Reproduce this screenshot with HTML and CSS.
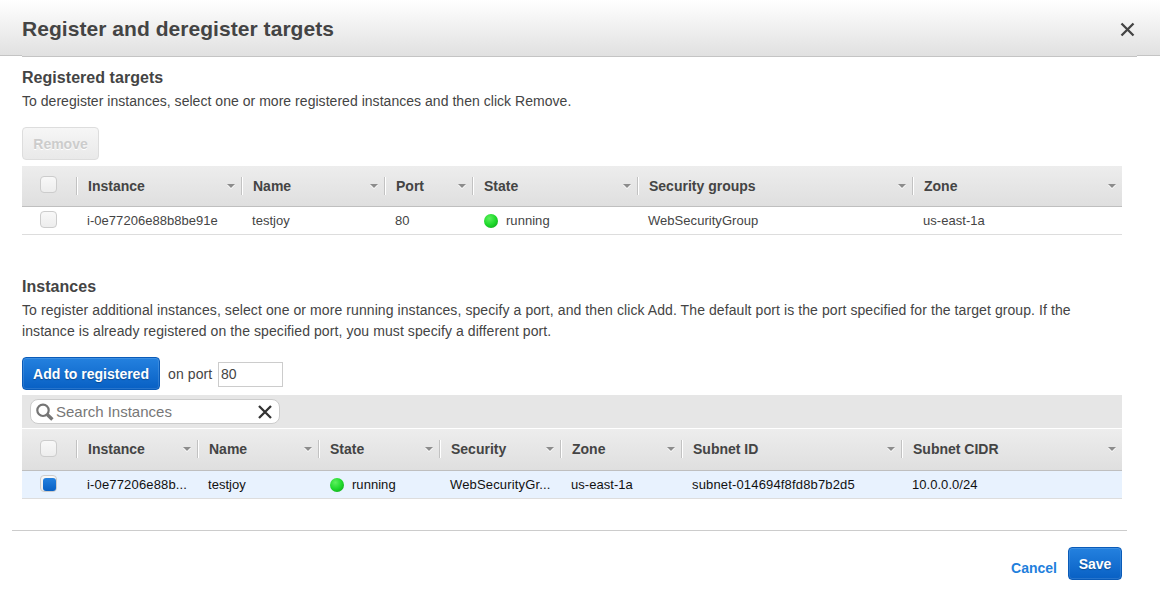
FILE: index.html
```html
<!DOCTYPE html>
<html lang="en">
<head>
<meta charset="utf-8">
<title>Register and deregister targets</title>
<link rel="stylesheet" href="styles.css">
</head>
<body>
<header class="titlebar">
  <h1>Register and deregister targets</h1>
  <svg class="close" width="15" height="15" viewBox="0 0 15 15"><path d="M1.5 1.5L13.5 13.5M13.5 1.5L1.5 13.5" stroke="#444" stroke-width="2.3" fill="none"/></svg>
</header>
<main class="content">
  <section class="registered">
    <h2>Registered targets</h2>
    <p>To deregister instances, select one or more registered instances and then click Remove.</p>
    <button class="btn disabled remove" disabled>Remove</button>
    <div class="row head targets">
      <div class="check"><span class="box"></span></div>
      <div class="th"><span>Instance</span><i></i></div>
      <div class="th"><span>Name</span><i></i></div>
      <div class="th"><span>Port</span><i></i></div>
      <div class="th"><span>State</span><i></i></div>
      <div class="th"><span>Security groups</span><i></i></div>
      <div class="th"><span>Zone</span><i></i></div>
    </div>
    <div class="row data targets">
      <div class="check"><span class="box"></span></div>
      <div class="td">i-0e77206e88b8be91e</div>
      <div class="td">testjoy</div>
      <div class="td">80</div>
      <div class="td state"><b class="dot"></b>running</div>
      <div class="td">WebSecurityGroup</div>
      <div class="td">us-east-1a</div>
    </div>
  </section>
  <section class="instances">
    <h2>Instances</h2>
    <p>To register additional instances, select one or more running instances, specify a port, and then click Add. The default port is the port specified for the target group. If the<br>instance is already registered on the specified port, you must specify a different port.</p>
    <div class="actions">
      <button class="btn primary add">Add to registered</button>
      <label class="port-label">on port</label>
      <div class="port">80</div>
    </div>
    <div class="toolbar">
      <div class="search">
        <svg width="18" height="18" viewBox="0 0 18 18"><circle cx="7" cy="7.3" r="5.7" fill="none" stroke="#757575" stroke-width="2.2"/><path d="M11.2 11.4L16.4 16.4" stroke="#757575" stroke-width="3.4"/></svg>
        <span>Search Instances</span>
        <svg width="14" height="14" viewBox="0 0 14 14"><path d="M1 1L13 13M13 1L1 13" stroke="#333" stroke-width="2.3" fill="none"/></svg>
      </div>
    </div>
    <div class="row head available">
      <div class="check"><span class="box"></span></div>
      <div class="th"><span>Instance</span><i></i></div>
      <div class="th"><span>Name</span><i></i></div>
      <div class="th"><span>State</span><i></i></div>
      <div class="th"><span>Security</span><i></i></div>
      <div class="th"><span>Zone</span><i></i></div>
      <div class="th"><span>Subnet ID</span><i></i></div>
      <div class="th"><span>Subnet CIDR</span><i></i></div>
    </div>
    <div class="row data available selected">
      <div class="check"><span class="box on"></span></div>
      <div class="td clipped">i-0e77206e88b...</div>
      <div class="td">testjoy</div>
      <div class="td state"><b class="dot"></b>running</div>
      <div class="td clipped">WebSecurityGr...</div>
      <div class="td">us-east-1a</div>
      <div class="td clipped">subnet-014694f8fd8b7b2d5</div>
      <div class="td">10.0.0.0/24</div>
    </div>
  </section>
</main>
<footer class="footer">
  <a class="cancel">Cancel</a>
  <button class="btn primary save">Save</button>
</footer>
</body>
</html>
```

FILE: styles.css
```css
* { box-sizing: border-box; }
body {
  margin: 0;
  width: 1160px;
  height: 599px;
  overflow: hidden;
  background: #fff;
  color: #444;
  font: 14px/21px "Liberation Sans", Arial, sans-serif;
}
h1, h2, p { margin: 0; white-space: nowrap; }

.titlebar {
  display: flex;
  justify-content: space-between;
  height: 57px;
  padding: 0 25px 0 22px;
  background:
    linear-gradient(#c4c4c4, #c4c4c4) 22px 56px / 1115px 1px no-repeat,
    linear-gradient(#fff, #fff) 0 56px / 100% 1px no-repeat,
    linear-gradient(#c4c4c4, #c4c4c4) 0 55px / 22px 1px no-repeat,
    linear-gradient(#c4c4c4, #c4c4c4) 1137px 55px / 23px 1px no-repeat,
    linear-gradient(#fff, #e0e0e0);
}
h1 { font-size: 21px; line-height: 58px; letter-spacing: .05px; }
.close { margin-top: 22px; }

.content { padding: 0 38px 0 22px; }
h2 { font-size: 16px; line-height: 20px; letter-spacing: .04px; }
.registered { padding-top: 11px; height: 210px; }
.registered p { margin-top: 3px; letter-spacing: .035px; }
.instances { padding-top: 10px; height: 263px; }
.instances p { margin-top: 3px; letter-spacing: .084px; }

.btn {
  display: block;
  height: 33px;
  padding: 1px 0 0;
  border-radius: 4px;
  font: bold 14px/31px "Liberation Sans", Arial, sans-serif;
  text-align: center;
  white-space: nowrap;
}
.primary {
  border: 1px solid #0a5bb8;
  background: linear-gradient(#2481df, #0860c4);
  box-shadow: inset 0 0 0 1px rgba(255, 255, 255, .12);
  color: #fff;
  text-shadow: 0 1px 1px rgba(0, 0, 0, .3);
}
.disabled {
  border: 1px solid #ddd;
  background: linear-gradient(#f6f6f6, #e9e9e9);
  color: #ccc;
  text-shadow: 0 1px 0 #fff;
}
.remove { width: 77px; margin: 15px 0 6px; }

.row { display: grid; }
.targets { grid-template-columns: 54px 165px 143px 88px 165px 275px 210px; }
.available { grid-template-columns: 54px repeat(5, 121px) 220px 221px; }
.head {
  height: 41px;
  border-bottom: 1px solid #bfbfbf;
  background: linear-gradient(#ededed, #dfdfdf);
  font-weight: bold;
}
.available.head { height: 42px; }
.th {
  display: flex;
  justify-content: space-between;
  align-items: center;
  padding: 0 6px 0 12px;
  background:
    linear-gradient(#c2c2c2, #c2c2c2) 0 11px / 1px 18px no-repeat,
    linear-gradient(#fff, #fff) 1px 11px / 1px 18px no-repeat;
}
.th i {
  border: 4px solid transparent;
  border-top-color: #8c8c8c;
  border-bottom: 0;
  filter: drop-shadow(0 1px 0 #fff);
  margin-bottom: 1px;
}
.data {
  height: 28px;
  border-bottom: 1px solid #ddd;
  font-size: 13px;
  line-height: 27px;
}
.td { padding-left: 11px; white-space: nowrap; letter-spacing: .04px; }
.clipped { letter-spacing: .16px; }
.selected { background: #e8f2fe; color: #111; }
.check { padding: 10px 0 0 18px; }
.data .check { padding-top: 4px; }
.available.head .check { padding-top: 11px; }
.box {
  display: block;
  width: 17px;
  height: 17px;
  border: 1px solid #ccc;
  border-radius: 4px;
  background: linear-gradient(#f8f8f8, #ededed);
}
.on {
  padding: 2px 0 0 2px;
}
.on::before {
  content: "";
  display: block;
  width: 13px;
  height: 13px;
  border-radius: 3px;
  background: linear-gradient(#2481df, #0860c4);
}
.state { display: flex; align-items: center; }
.dot {
  width: 14px;
  height: 14px;
  margin: 0 8px 0 1px;
  border-radius: 50%;
  background: radial-gradient(circle at 38% 32%, #5df05d, #1fd92c 50%, #0c9a16 100%);
}

.actions { display: flex; height: 33px; margin: 15px 0 5px; }
.add { width: 138px; }
.port-label { width: 45px; margin: 7px 5px 0 8px; padding-left: 0; letter-spacing: .1px; }
.port {
  width: 65px;
  height: 25px;
  margin-top: 5px;
  padding-left: 2px;
  border: 1px solid #ccc;
  line-height: 23px;
}
.toolbar { height: 34px; padding: 4px 8px; background: #e6e6e6; border-bottom: 1px solid #fff; }
.search {
  display: flex;
  align-items: center;
  width: 250px;
  height: 25px;
  padding: 0 7px 0 5px;
  border: 1px solid #ccc;
  border-radius: 8px;
  background: #fff;
  color: #777;
}
.search span { flex: 1; padding-left: 2px; font-size: 15px; }

.footer {
  display: flex;
  justify-content: flex-end;
  width: 1115px;
  margin-left: 12px;
  padding: 16px 5px 0 0;
  border-top: 1px solid #ccc;
}
.cancel { margin: 11px 11px 0 0; color: #1f80dc; font-weight: bold; }
.save { width: 54px; }
```
